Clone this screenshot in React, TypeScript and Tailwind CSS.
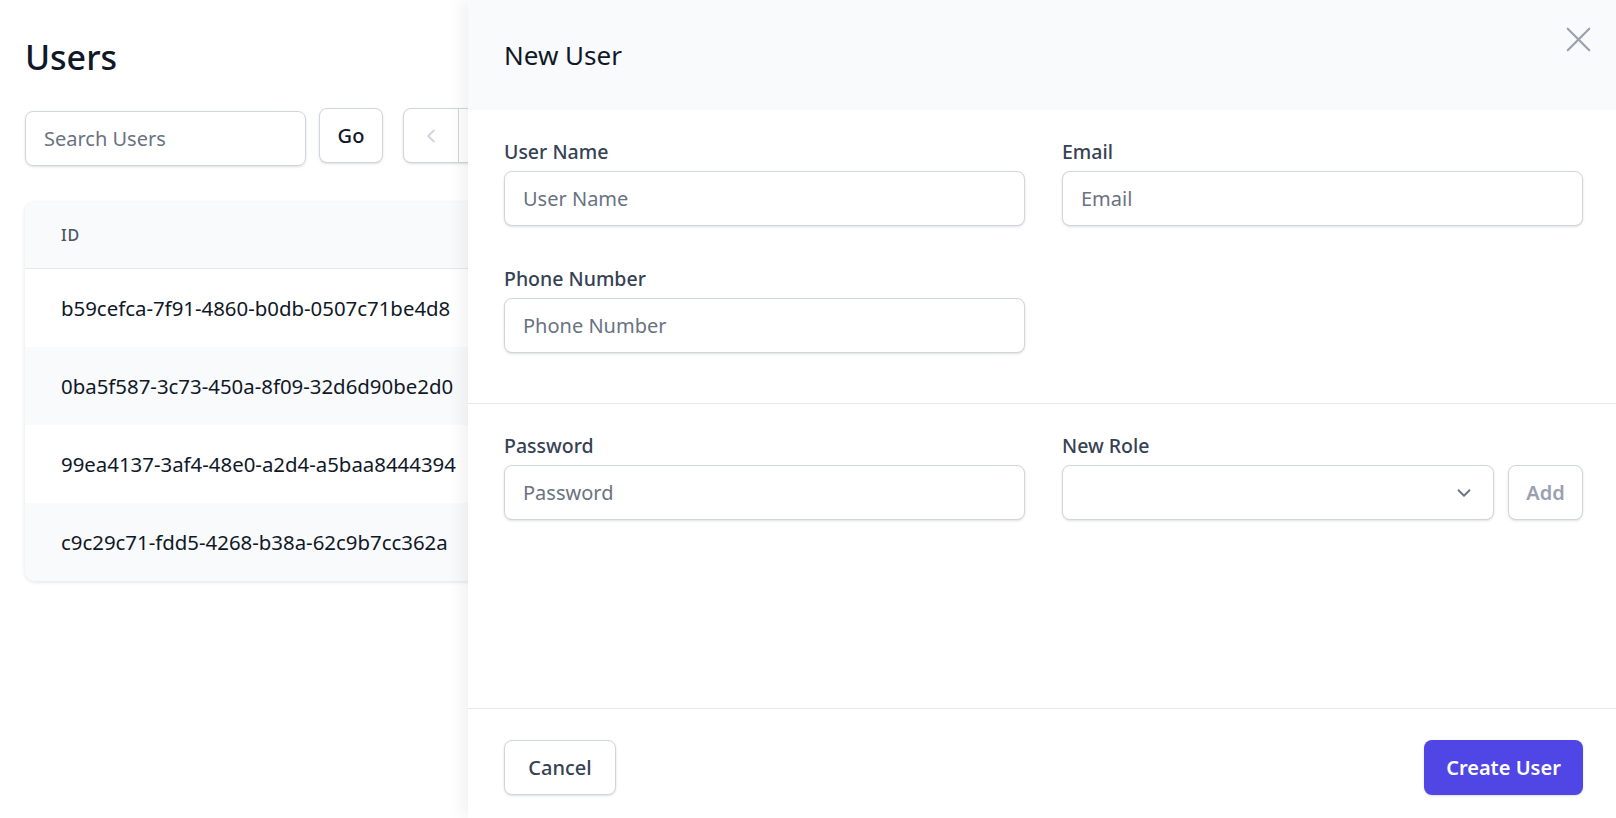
import React from "react";
import { X, ChevronLeft, ChevronDown } from "lucide-react";

const userIds = [
  "b59cefca-7f91-4860-b0db-0507c71be4d8",
  "0ba5f587-3c73-450a-8f09-32d6d90be2d0",
  "99ea4137-3af4-48e0-a2d4-a5baa8444394",
  "c9c29c71-fdd5-4268-b38a-62c9b7cc362a",
];

function Label({ children }: { children: React.ReactNode }) {
  return <label className="mb-[7px] text-[19.5px] leading-[25px] font-medium text-gray-700">{children}</label>;
}

function Field({ label, placeholder }: { label: string; placeholder: string }) {
  return (
    <div className="flex flex-col">
      <Label>{label}</Label>
      <input
        placeholder={placeholder}
        className="h-[55px] w-full rounded-[8px] border border-gray-300 bg-white px-[18px] text-[20px] text-gray-900 placeholder-gray-500 shadow-sm focus:outline-none"
      />
    </div>
  );
}

export default function App() {
  return (
    <div className="relative h-[818px] w-full overflow-hidden bg-white text-gray-900 font-['Noto_Sans',sans-serif]">
      {/* Users page */}
      <div className="px-[25px] pt-[33px]">
        <h1 className="text-[34px] leading-[48px] font-medium text-gray-900">Users</h1>

        <div className="mt-[27px] flex items-start">
          <input
            placeholder="Search Users"
            className="mt-[3px] h-[55px] w-[281px] rounded-[8px] border border-gray-300 px-[18px] text-[20px] placeholder-gray-500 shadow-sm focus:outline-none"
          />
          <button className="ml-[13px] h-[55px] w-[64px] rounded-[8px] border border-gray-300 bg-white text-[20px] font-medium text-gray-900 shadow-sm">
            Go
          </button>
          <div className="ml-[20px] flex h-[55px] rounded-[8px] border border-gray-300 bg-white shadow-sm">
            <div className="flex w-[55px] items-center justify-center border-r border-gray-300 text-gray-300">
              <ChevronLeft className="h-[22px] w-[22px]" strokeWidth={2} />
            </div>
            <div className="w-[55px]" />
          </div>
        </div>

        <div className="mt-[36px] w-[1000px] overflow-hidden rounded-[10px] bg-white shadow-[0_1px_4px_rgba(0,0,0,0.12)]">
          <div className="flex h-[67px] items-center border-b border-gray-200 bg-gray-50 px-[36px]">
            <span className="text-[16px] font-medium uppercase tracking-wider text-gray-600">ID</span>
          </div>
          {userIds.map((id, i) => (
            <div
              key={id}
              className={`flex h-[78px] items-center px-[36px] ${i % 2 === 1 ? "bg-gray-50" : "bg-white"}`}
            >
              <span className="text-[20.4px] text-gray-900">{id}</span>
            </div>
          ))}
        </div>
      </div>

      {/* Slide-over panel */}
      <div className="absolute right-0 top-0 flex h-full w-[1148px] flex-col bg-white shadow-[-6px_0_16px_rgba(0,0,0,0.06)]">
        <div className="flex h-[110px] shrink-0 justify-between bg-gray-50 pl-[36px] pr-[16px]">
          <h2 className="self-center text-[26px] text-gray-900">New User</h2>
          <button className="mt-[18px] flex h-[43px] w-[43px] items-center justify-center text-gray-400">
            <X className="h-[43px] w-[43px]" strokeWidth={1.2} />
          </button>
        </div>

        <div className="flex-1">
          <div className="grid grid-cols-2 gap-x-[37px] gap-y-[40px] pb-[50px] pl-[36px] pr-[33px] pt-[29px]">
            <Field label="User Name" placeholder="User Name" />
            <Field label="Email" placeholder="Email" />
            <Field label="Phone Number" placeholder="Phone Number" />
          </div>

          <div className="grid grid-cols-2 gap-x-[37px] border-t border-gray-200 pl-[36px] pr-[33px] pt-[29px]">
            <Field label="Password" placeholder="Password" />
            <div className="flex flex-col">
              <Label>New Role</Label>
              <div className="flex gap-[14px]">
                <div className="flex h-[55px] flex-1 items-center justify-end rounded-[8px] border border-gray-300 bg-white pr-[18px] shadow-sm">
                  <ChevronDown className="h-[22px] w-[22px] text-gray-500" strokeWidth={2} />
                </div>
                <button className="h-[55px] w-[75px] rounded-[8px] border border-gray-300 bg-white text-[20px] font-semibold text-gray-400 shadow-sm">
                  Add
                </button>
              </div>
            </div>
          </div>
        </div>

        <div className="flex h-[110px] shrink-0 items-start justify-between border-t border-gray-200 pl-[36px] pr-[33px] pt-[31px]">
          <button className="h-[55px] w-[112px] rounded-[8px] border border-gray-300 bg-white text-[20px] font-medium text-gray-700 shadow-sm">
            Cancel
          </button>
          <button className="h-[55px] w-[159px] rounded-[8px] bg-[#4f46e5] text-[20px] font-semibold text-white shadow-sm">
            Create User
          </button>
        </div>
      </div>
    </div>
  );
}
